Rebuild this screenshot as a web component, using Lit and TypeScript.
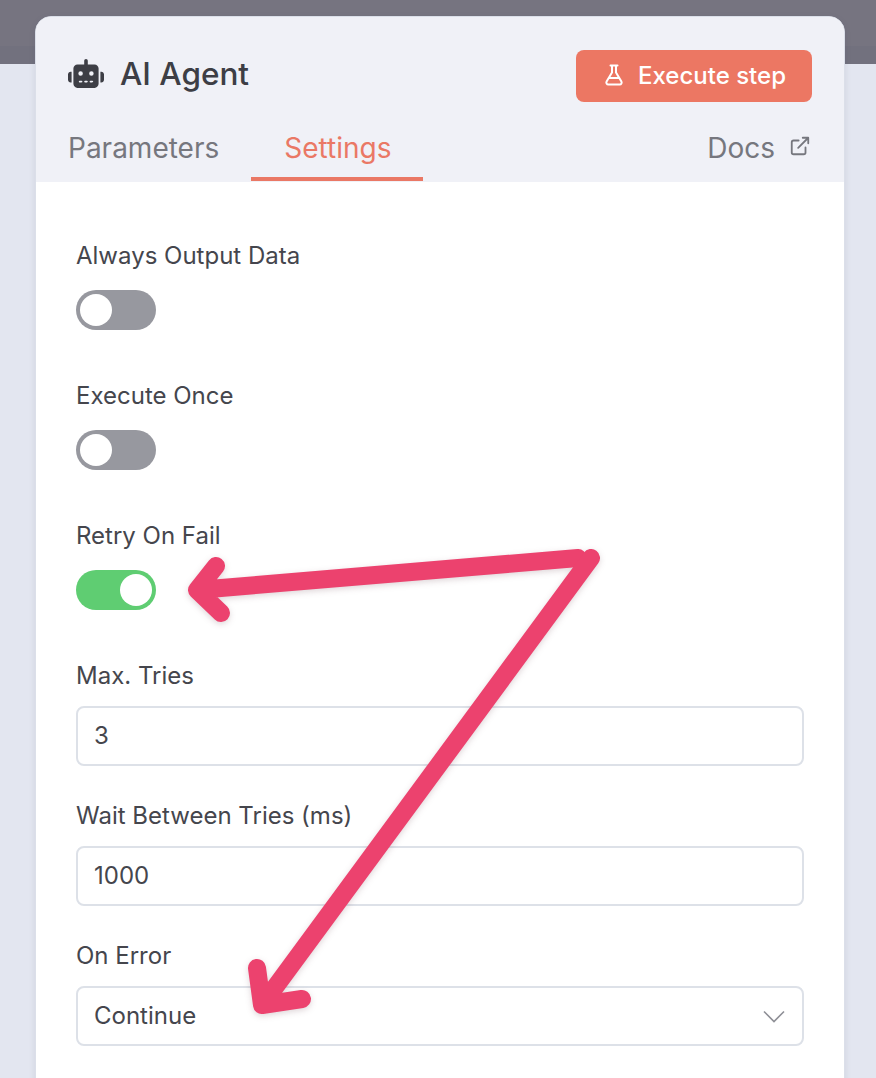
import { LitElement, css, html, svg } from 'lit';
import { customElement } from 'lit/decorators.js';

const toggles = [
  { label: 'Always Output Data', on: false },
  { label: 'Execute Once', on: false },
  { label: 'Retry On Fail', on: true }
];

const inputs = [
  { label: 'Max. Tries', value: '3' },
  { label: 'Wait Between Tries (ms)', value: '1000' }
];

const robot = svg`<path d="M320 0c17.7 0 32 14.3 32 32V96H472c39.8 0 72 32.2 72 72V440c0 39.8-32.2 72-72 72H168c-39.8 0-72-32.2-72-72V168c0-39.8 32.2-72 72-72H288V32c0-17.7 14.3-32 32-32zM208 384c-8.8 0-16 7.2-16 16s7.2 16 16 16h32c8.8 0 16-7.2 16-16s-7.2-16-16-16H208zm96 0c-8.8 0-16 7.2-16 16s7.2 16 16 16h32c8.8 0 16-7.2 16-16s-7.2-16-16-16H304zm96 0c-8.8 0-16 7.2-16 16s7.2 16 16 16h32c8.8 0 16-7.2 16-16s-7.2-16-16-16H400zM264 256a40 40 0 1 0 -80 0 40 40 0 1 0 80 0zm152 40a40 40 0 1 0 0-80 40 40 0 1 0 0 80zM48 224H64V416H48c-26.5 0-48-21.5-48-48V272c0-26.5 21.5-48 48-48zm544 0c26.5 0 48 21.5 48 48v96c0 26.5-21.5 48-48 48H576V224h16z" />`;

@customElement('app-root')
export class AppRoot extends LitElement {
  static styles = css`
    :host {
      display: block;
      width: 876px;
      height: 1078px;
      overflow: hidden;
      position: relative;
      background: #e3e6f0;
      font-family: Inter, 'Liberation Sans', sans-serif;
      color: #45464d;
    }

    .backdrop {
      height: 64px;
      margin-bottom: -48px;
      background: linear-gradient(#767480 46px, #72717e 46px);
    }

    .panel {
      position: relative;
      margin-left: 35px;
      width: 810px;
      height: 1100px;
      box-sizing: border-box;
      border: 1px solid #dbdfe9;
      border-radius: 16px 16px 0 0;
      background: #fff;
      overflow: hidden;
      box-shadow: 0 2px 6px rgba(68, 72, 110, 0.12);
    }

    header {
      background: #f0f1f7;
      height: 165px;
      box-sizing: border-box;
      padding: 33px 32px 0 32px;
    }

    .title-row {
      display: flex;
      align-items: center;
      justify-content: space-between;
      height: 52px;
    }

    .title {
      display: flex;
      align-items: center;
      gap: 16px;
      margin-top: -6px;
      font-size: 31.5px;
      font-weight: 500;
      color: #3d3e45;
    }

    .robot {
      width: 36px;
      height: 29px;
      fill: #3d3e45;
    }

    .run {
      display: flex;
      align-items: center;
      gap: 12px;
      width: 236px;
      height: 52px;
      padding: 0 0 2px;
      justify-content: center;
      border: 0;
      border-radius: 8px;
      background: #ec7763;
      color: #fff;
      font: 500 24px Inter, sans-serif;
    }

    .run svg {
      width: 24px;
      height: 24px;
      fill: none;
      stroke: #fff;
      stroke-width: 2;
      stroke-linecap: round;
      stroke-linejoin: round;
    }

    .tabs {
      display: flex;
      align-items: stretch;
      height: 62px;
      margin-top: 17px;
      font-size: 28px;
      color: #76777e;
    }

    .tab {
      display: flex;
      align-items: center;
      padding-bottom: 4px;
      box-sizing: border-box;
    }

    .tab.active {
      margin-left: 32px;
      padding: 0 32px 4px 33px;
      box-shadow: inset 0 -4px 0 #ea7865;
      color: #ea7865;
    }

    .docs {
      margin-left: auto;
      gap: 14px;
      padding-right: 1px;
    }

    .docs svg {
      width: 22px;
      height: 22px;
      margin-top: -4px;
      fill: none;
      stroke: #76777e;
      stroke-width: 2;
      stroke-linecap: round;
      stroke-linejoin: round;
    }

    .fields {
      display: grid;
      grid-auto-rows: 140px;
      padding: 58px 40px 0;
    }

    label {
      display: block;
      height: 32px;
      line-height: 32px;
      font-size: 24px;
    }

    .toggle {
      position: relative;
      width: 80px;
      height: 40px;
      margin-top: 18px;
      border-radius: 20px;
      background: #97989f;
    }

    .toggle::after {
      content: '';
      position: absolute;
      top: 4px;
      left: 4px;
      width: 32px;
      height: 32px;
      border-radius: 50%;
      background: #fff;
    }

    .toggle.on {
      background: #5fcd72;
    }

    .toggle.on::after {
      left: 44px;
    }

    .box {
      display: flex;
      align-items: center;
      justify-content: space-between;
      width: 728px;
      height: 60px;
      margin-top: 14px;
      box-sizing: border-box;
      padding: 0 17px 2px 16px;
      border: 2px solid #dde1e8;
      border-radius: 8px;
      font-size: 24px;
    }

    .box svg {
      width: 22px;
      height: 13px;
      margin: 2px 0 0 0;
      fill: none;
      stroke: #8e8f96;
      stroke-width: 1.6;
    }

    .arrows {
      position: absolute;
      inset: 0;
      width: 876px;
      height: 1078px;
      fill: none;
      stroke: #ec426e;
      stroke-width: 18;
      stroke-linecap: round;
      stroke-linejoin: round;
      filter: drop-shadow(0 2px 3px rgba(70, 20, 40, 0.18));
      pointer-events: none;
    }
  `;

  render() {
    return html`
      <div class="backdrop"></div>
      <section class="panel">
        <header>
          <div class="title-row">
            <div class="title">
              <svg class="robot" viewBox="0 0 640 512">${robot}</svg>
              <span>AI Agent</span>
            </div>
            <button class="run">
              <svg viewBox="0 0 24 24">
                <path d="M8.5 2.5h7M10 2.5v7L4.6 18.6a2 2 0 0 0 1.7 3h11.4a2 2 0 0 0 1.7-3L14 9.5v-7M7.5 15h9" />
              </svg>
              Execute step
            </button>
          </div>
          <nav class="tabs">
            <div class="tab">Parameters</div>
            <div class="tab active">Settings</div>
            <div class="tab docs">
              Docs
              <svg viewBox="0 0 24 24">
                <path d="M18 13.5V19a2 2 0 0 1-2 2H5a2 2 0 0 1-2-2V8a2 2 0 0 1 2-2h5.5M15 3h6v6M10 14 21 3" />
              </svg>
            </div>
          </nav>
        </header>
        <div class="fields">
          ${toggles.map(
            (t) => html`<div>
              <label>${t.label}</label>
              <div class="toggle ${t.on ? 'on' : ''}"></div>
            </div>`
          )}
          ${inputs.map(
            (i) => html`<div>
              <label>${i.label}</label>
              <div class="box">${i.value}</div>
            </div>`
          )}
          <div>
            <label>On Error</label>
            <div class="box">
              Continue
              <svg viewBox="0 0 22 13"><path d="M1 1.5l10 10 10-10" /></svg>
            </div>
          </div>
        </div>
      </section>
      <svg class="arrows" viewBox="0 0 876 1078">
        <path d="M578 558 197 590M216 566 197 590 221 613" />
        <path d="M591 558 262 1005M257 968 262 1005 302 999" />
      </svg>
    `;
  }
}
